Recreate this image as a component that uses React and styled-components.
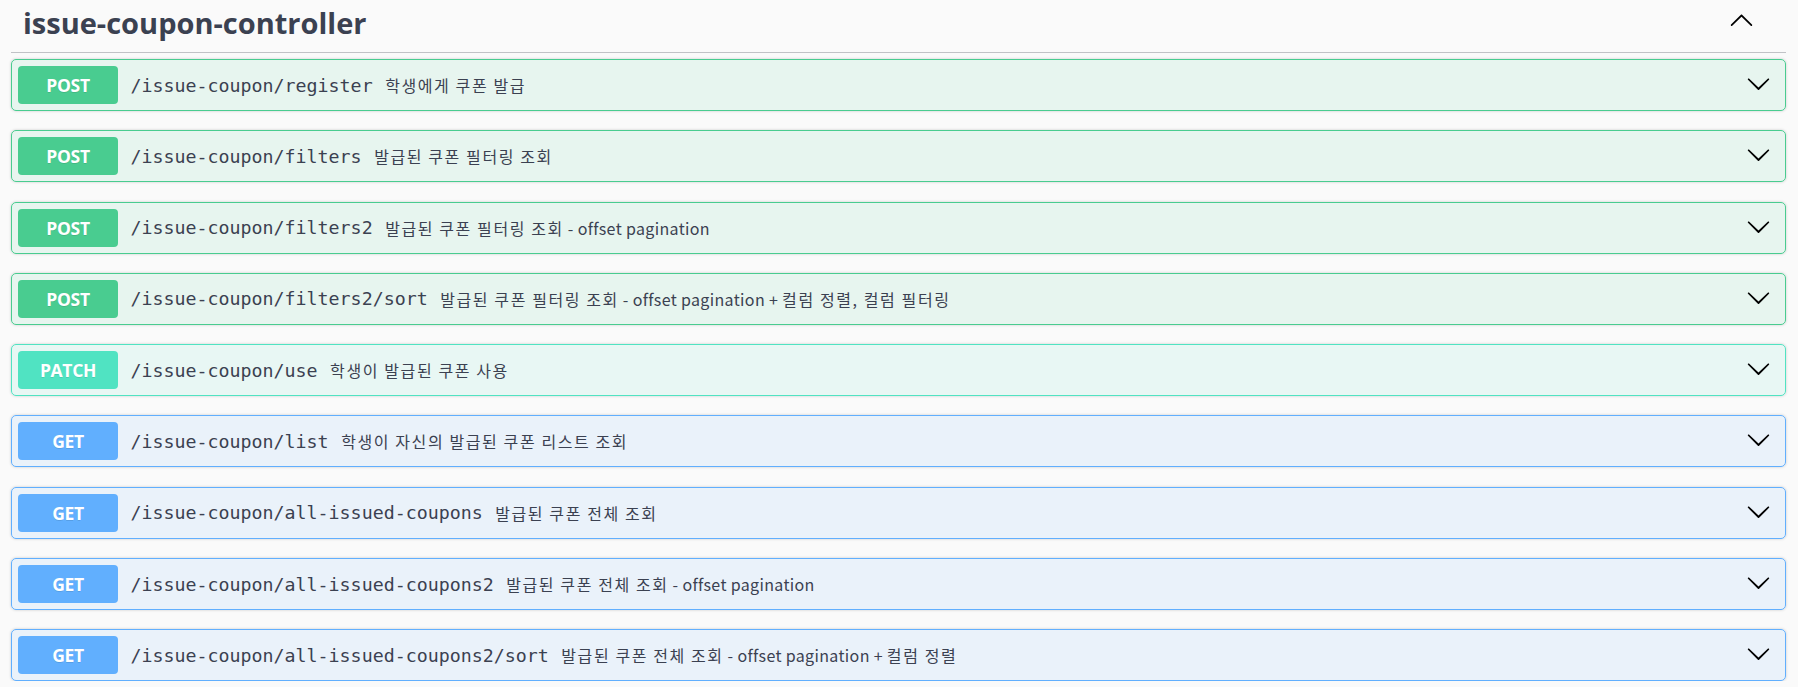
import React from "react";
import styled, { createGlobalStyle } from "styled-components";

const GlobalStyle = createGlobalStyle`
  html, body {
    margin: 0;
    padding: 0;
    background: #fafafa;
  }
  body {
    font-family: "Open Sans", "Noto Sans CJK KR", sans-serif;
  }
`;

const METHOD_COLORS = {
  POST: { main: "#49cc90", bg: "rgba(73, 204, 144, 0.1)" },
  PATCH: { main: "#50e3c2", bg: "rgba(80, 227, 194, 0.1)" },
  GET: { main: "#61affe", bg: "rgba(97, 175, 254, 0.1)" },
};

const Page = styled.div`
  padding: 0 12px 0 11px;
`;

const TagSection = styled.section`
  display: flex;
  flex-direction: column;
`;

const TagHeader = styled.div`
  display: flex;
  align-items: center;
  box-sizing: border-box;
  height: 53px;
  padding: 0 32px 0 12px;
  border-bottom: 1px solid rgba(59, 65, 81, 0.3);
  margin-bottom: 6px;
`;

const TagTitle = styled.h3`
  flex: 1;
  margin: 0;
  padding-bottom: 8px;
  font-family: "Open Sans", "Noto Sans CJK KR", sans-serif;
  font-weight: 700;
  font-size: 29px;
  line-height: 29px;
  color: #3b4151;
`;

const ToggleButton = styled.button`
  align-self: flex-start;
  margin-top: 7px;
  display: flex;
  padding: 0;
  border: none;
  background: none;
  cursor: pointer;
`;

const OpList = styled.div`
  display: flex;
  flex-direction: column;
  gap: 19.3px;
`;

const OpBlock = styled.div`
  display: flex;
  align-items: center;
  box-sizing: border-box;
  height: 52px;
  padding: 0 14px 0 6px;
  border: 1px solid ${(p) => METHOD_COLORS[p.$method].main};
  border-radius: 5px;
  background: ${(p) => METHOD_COLORS[p.$method].bg};
  box-shadow: 0 0 3px rgba(0, 0, 0, 0.19);
`;

const MethodBadge = styled.span`
  display: flex;
  align-items: center;
  justify-content: center;
  box-sizing: border-box;
  min-width: 100px;
  height: 38px;
  border-radius: 4px;
  background: ${(p) => METHOD_COLORS[p.$method].main};
  color: #fff;
  font-family: "Open Sans", sans-serif;
  font-weight: 700;
  font-size: 17.5px;
  letter-spacing: -0.3px;
  text-shadow: 0 1px 0 rgba(0, 0, 0, 0.1);
`;

const PathText = styled.span`
  padding: 0 12.5px;
  font-family: "DejaVu Sans Mono", "Liberation Mono", monospace;
  font-size: 18.3px;
  color: #3b4151;
  white-space: nowrap;
`;

const Description = styled.span`
  flex: 1;
  font-family: "Noto Sans CJK KR", "Noto Sans", sans-serif;
  font-size: 16px;
  color: #3b4151;
  white-space: nowrap;
`;

const TextRun = styled.span`
  letter-spacing: ${(p) => (p.$hangul ? "1.6px" : "0.35px")};
`;

const ArrowWrap = styled.span`
  display: flex;
  margin-bottom: 3px;
`;

const Chevron = ({ up }) => (
  <svg width="25" height="25" viewBox="0 0 20 20" aria-hidden="true">
    <path
      fill="#000"
      d={
        up
          ? "M17.418 14.908c.272.268.709.268.979 0s.271-.701 0-.969l-7.908-7.83c-.27-.268-.707-.268-.979 0l-7.908 7.83c-.27.268-.27.701 0 .969.271.268.709.268.979 0L10 7.767l7.418 7.141z"
          : "M17.418 6.109c.272-.268.709-.268.979 0s.271.701 0 .969l-7.908 7.83c-.27.268-.707.268-.979 0l-7.908-7.83c-.27-.268-.27-.701 0-.969.271-.268.709-.268.979 0L10 13.25l7.418-7.141z"
      }
    />
  </svg>
);

// Split text into runs of Hangul (with spaces between words) and other text.
const splitRuns = (text) => {
  const parts = text.match(/[\uac00-\ud7a3]+(?:[ ,]+[\uac00-\ud7a3]+)*|[^\uac00-\ud7a3]+/g) || [];
  return parts.map((part, i) => (
    <TextRun key={i} $hangul={/[\uac00-\ud7a3]/.test(part)}>
      {part}
    </TextRun>
  ));
};

const OPERATIONS = [
  { method: "POST", path: "/issue-coupon/register", desc: "학생에게 쿠폰 발급" },
  { method: "POST", path: "/issue-coupon/filters", desc: "발급된 쿠폰 필터링 조회" },
  { method: "POST", path: "/issue-coupon/filters2", desc: "발급된 쿠폰 필터링 조회 - offset pagination" },
  {
    method: "POST",
    path: "/issue-coupon/filters2/sort",
    desc: "발급된 쿠폰 필터링 조회 - offset pagination + 컬럼 정렬, 컬럼 필터링",
  },
  { method: "PATCH", path: "/issue-coupon/use", desc: "학생이 발급된 쿠폰 사용" },
  { method: "GET", path: "/issue-coupon/list", desc: "학생이 자신의 발급된 쿠폰 리스트 조회" },
  { method: "GET", path: "/issue-coupon/all-issued-coupons", desc: "발급된 쿠폰 전체 조회" },
  {
    method: "GET",
    path: "/issue-coupon/all-issued-coupons2",
    desc: "발급된 쿠폰 전체 조회 - offset pagination",
  },
  {
    method: "GET",
    path: "/issue-coupon/all-issued-coupons2/sort",
    desc: "발급된 쿠폰 전체 조회 - offset pagination + 컬럼 정렬",
  },
];

export default function App() {
  return (
    <Page>
      <GlobalStyle />
      <TagSection>
        <TagHeader>
          <TagTitle>issue-coupon-controller</TagTitle>
          <ToggleButton aria-label="Collapse operation">
            <Chevron up />
          </ToggleButton>
        </TagHeader>
        <OpList>
          {OPERATIONS.map((op) => (
            <OpBlock key={op.path} $method={op.method}>
              <MethodBadge $method={op.method}>{op.method}</MethodBadge>
              <PathText>{op.path}</PathText>
              <Description>{splitRuns(op.desc)}</Description>
              <ArrowWrap>
                <Chevron />
              </ArrowWrap>
            </OpBlock>
          ))}
        </OpList>
      </TagSection>
    </Page>
  );
}
